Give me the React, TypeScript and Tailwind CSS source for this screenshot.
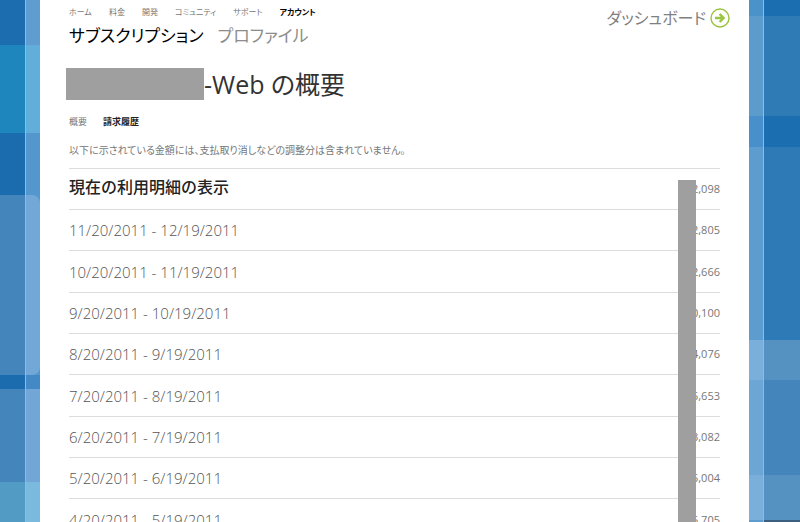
import { clsx } from 'clsx';

const siteLinks = [
  { label: 'ホーム' },
  { label: '料金' },
  { label: '開発' },
  { label: 'コミュニティ' },
  { label: 'サポート' },
  { label: 'アカウント', active: true },
];

const periods = [
  { label: '11/20/2011 - 12/19/2011', amount: '2,805' },
  { label: '10/20/2011 - 11/19/2011', amount: '2,666' },
  { label: '9/20/2011 - 10/19/2011', amount: '0,100' },
  { label: '8/20/2011 - 9/19/2011', amount: '4,076' },
  { label: '7/20/2011 - 8/19/2011', amount: '5,653' },
  { label: '6/20/2011 - 7/19/2011', amount: '3,082' },
  { label: '5/20/2011 - 6/19/2011', amount: '5,004' },
  { label: '4/20/2011 - 5/19/2011', amount: '5,705' },
];

// Background tiles: the page colour and the lighter frame beside the sheet
const leftTiles = [
  { height: 'h-[45px]', tile: 'bg-[#1b6db0]', frame: 'bg-[#5f9dd1]' },
  { height: 'h-[88px]', tile: 'bg-[#1f85bd]', frame: 'bg-[#61aedb]' },
  { height: 'h-[62px]', tile: 'bg-[#1a6cae]', frame: 'bg-[#5497cf]' },
  { height: 'h-[180px]', tile: 'bg-[#4485bb]', frame: 'rounded-r-lg bg-[#71a8d8]' },
  { height: 'h-[14px]', tile: 'bg-[#1a6cae]', frame: 'bg-[#4389c6]' },
  { height: 'h-[93px]', tile: 'bg-[#4485bb]', frame: 'bg-[#71a6d7]' },
  { height: 'grow', tile: 'bg-[#519bc5]', frame: 'bg-[#7abade]' },
];

const rightTiles = [
  { height: 'h-[16px]', tile: 'bg-[#1b6eb0]', frame: 'bg-[#4a92ca]' },
  { height: 'h-[100px]', tile: 'bg-[#2f7bb6]', frame: 'bg-[#5c9ccd]' },
  { height: 'h-[31px]', tile: 'bg-[#1b6eb0]', frame: 'bg-[#4890cb]' },
  { height: 'h-[193px]', tile: 'bg-[#2e7ab6]', frame: 'bg-[#5c9ccf]' },
  { height: 'h-[40px]', tile: 'bg-[#5592c2]', frame: 'bg-[#7bafdb]' },
  { height: 'h-[95px]', tile: 'bg-[#4486bc]', frame: 'bg-[#6ba6d4]' },
  { height: 'h-[45px]', tile: 'bg-[#5592c2]', frame: 'bg-[#7bafdb]' },
  { height: 'grow', tile: 'bg-[#3c5f80]', frame: 'bg-[#5c9ccf]' },
];

function Tiles({ side }: { side: 'left' | 'right' }) {
  const tiles = side === 'left' ? leftTiles : rightTiles;
  return (
    <div
      aria-hidden="true"
      className={clsx('flex shrink-0 flex-col bg-[#5497cf]', side === 'left' ? 'w-10' : 'w-[51px]')}
    >
      {tiles.map(({ height, tile, frame }, i) => (
        <div key={i} className={clsx('flex', side === 'right' && 'flex-row-reverse', height)}>
          <div className={clsx('grow', tile)} />
          <div
            className={clsx(
              'w-[15px] border-[#8dbce0]',
              side === 'left' ? 'border-l' : 'border-r',
              frame,
            )}
          />
        </div>
      ))}
    </div>
  );
}

function ArrowCircle() {
  return (
    <svg viewBox="0 0 20 20" className="size-5" fill="none" stroke="#9ac53e" aria-hidden="true">
      <circle cx="10" cy="10" r="9" strokeWidth="1.4" />
      <path d="M5 10h8M9.6 6l4 4-4 4" strokeWidth="2.4" />
    </svg>
  );
}

export default function App() {
  return (
    <div className="flex min-h-screen bg-white font-['Open_Sans','Noto_Sans_CJK_JP',sans-serif] text-[#777] [font-feature-settings:'palt']">
      <Tiles side="left" />

      <main className="flex min-w-0 grow flex-col px-[29px]">
        <header className="flex justify-between">
          <div className="pt-1.5">
            <nav className="flex gap-[17px] text-[8px] leading-3">
              {siteLinks.map((link) => (
                <a
                  key={link.label}
                  href="#"
                  className={clsx(link.active && 'font-bold text-black')}
                >
                  {link.label}
                </a>
              ))}
            </nav>
            <nav className="mt-1.5 flex gap-3.5 text-[17px] leading-6">
              <a href="#" className="text-black">サブスクリプション</a>
              <a href="#" className="text-[#8c8c8c]">プロファイル</a>
            </nav>
          </div>
          <a href="#" className="-mr-2.5 flex items-center gap-1 self-start pt-1.5 text-[16px] leading-6 text-[#808080]">
            ダッシュボード
            <ArrowCircle />
          </a>
        </header>

        <h1 className="-ml-[3px] mt-5 flex items-center text-[25px] leading-8 text-[#333]">
          <span className="h-8 w-[138px] bg-[#9f9f9f]" />
          -Web の概要
        </h1>

        <nav className="mt-4 flex gap-4 text-[9px] leading-3">
          <a href="#">概要</a>
          <a href="#" className="font-bold text-[#222]">請求履歴</a>
        </nav>
        <p className="mt-3.5 text-[10px] leading-4">
          以下に示されている金額には、支払取り消しなどの調整分は含まれていません。
        </p>

        <div className="relative mt-2.5 grow">
          <table className="w-full border-collapse">
            <tbody>
              <tr className="h-[41px] border-t border-[#dcdcdc]">
                <th
                  scope="row"
                  className="pb-1 text-left text-[16px] leading-6 font-medium text-[#222] [font-feature-settings:normal]"
                >
                  <a href="#">現在の利用明細の表示</a>
                </th>
                <td className="text-right text-[11px] leading-4">2,098</td>
              </tr>
              {periods.map((period) => (
                <tr
                  key={period.label}
                  className="h-[41px] border-t border-[#dcdcdc] nth-[3n]:h-[42px]"
                >
                  <th scope="row" className="text-left text-[15px] leading-6 font-light text-[#555]">
                    <a href="#">{period.label}</a>
                  </th>
                  <td className="text-right text-[11px] leading-4">{period.amount}</td>
                </tr>
              ))}
            </tbody>
          </table>
          {/* covers the leading digits of the amounts */}
          <div className="absolute top-3 right-6 bottom-0 w-[18px] bg-[#9f9f9f]" />
        </div>
      </main>

      <Tiles side="right" />
    </div>
  );
}
